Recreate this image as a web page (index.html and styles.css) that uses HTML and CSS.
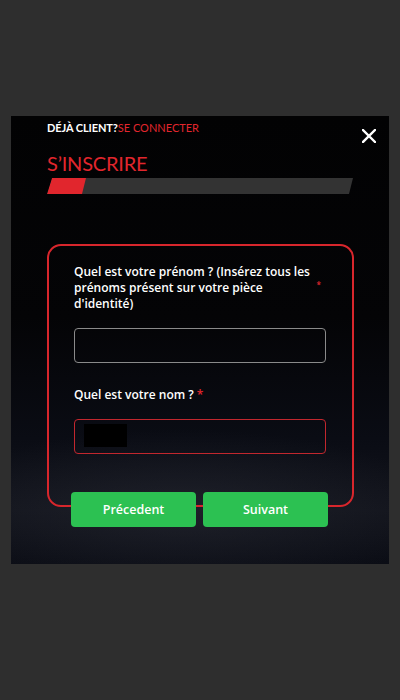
FILE: index.html
```html
<html>
<head>
    <meta charset="utf-8">
    <link rel="stylesheet" href="styles.css">
</head>
<body>
    <div class="modal">
        <span class="close">
            <svg width="14" height="14" viewBox="0 0 14 14"><path d="M1 1L13 13M13 1L1 13" stroke="#fff" stroke-width="2.4" stroke-linecap="square"/></svg>
        </span>
        <div class="login-line">
            <span class="already">DÉJÀ CLIENT?</span><span class="connect">SE CONNECTER</span>
        </div>
        <h1 class="title">S’INSCRIRE</h1>
        <div class="steps">
            <div class="steps-fill" style="width: 39px"></div>
        </div>

        <div class="form-card">
            <div class="field">
                <label class="field-label">
                    <span class="label-text">Quel est votre prénom ? (Insérez tous les prénoms présent sur votre pièce d'identité)</span>
                    <span class="req small">*</span>
                </label>
                <div class="input"></div>
            </div>
            <div class="field">
                <label class="field-label">
                    <span>Quel est votre nom ? <span class="req">*</span></span>
                </label>
                <div class="input error"><span class="autofill"></span></div>
            </div>
        </div>
        <div class="btn-row">
            <button class="btn">Précedent</button>
            <button class="btn">Suivant</button>
        </div>
    </div>
</body>
</html>
```

FILE: styles.css
```css
body {
    margin: 0;
    background-color: #2e2e2e;
    font-family: "Open Sans", Arial, sans-serif;
    color: #fff;
}

.modal {
    position: relative;
    width: 378px;
    height: 448px;
    margin: 116px 0 0 11px;
    padding: 5px 0 0 36px;
    box-sizing: border-box;
    background: radial-gradient(ellipse 70% 18% at 45% 88%, rgba(40, 42, 52, 0.55), rgba(40, 42, 52, 0) 100%),
        linear-gradient(180deg, #020203 0%, #040406 45%, #0a0c14 72%, #12141c 88%, #0b0d15 100%);
}

.close {
    position: absolute;
    top: 13px;
    right: 13px;
    display: flex;
}

.login-line {
    font-family: "Lato", Arial, sans-serif;
    font-size: 11px;
    line-height: 13px;
}

.already {
    font-weight: bold;
    letter-spacing: -0.1px;
}

.connect {
    color: #e1262d;
}

.title {
    margin: 17px 0 0 0;
    font-family: "Lato", Arial, sans-serif;
    font-weight: normal;
    font-size: 20px;
    line-height: 24px;
    color: #e1262d;
    letter-spacing: -0.2px;
}

.steps {
    margin-top: 3px;
    width: 306px;
    height: 16px;
    background-color: #333;
    clip-path: polygon(5px 0, 100% 0, calc(100% - 4px) 100%, 0 100%);
}

.steps-fill {
    height: 100%;
    background-color: #e1262d;
    clip-path: polygon(5px 0, 100% 0, calc(100% - 4px) 100%, 0 100%);
}

.form-card {
    margin-top: 50px;
    width: 307px;
    height: 263px;
    box-sizing: border-box;
    border: 2px solid #d8262c;
    border-radius: 14px;
    padding: 18px 26px 0 25px;
}

.field {
    margin-bottom: 24px;
}

.field-label {
    display: flex;
    align-items: center;
    justify-content: space-between;
    font-size: 12px;
    line-height: 16px;
    font-weight: 600;
    margin-bottom: 16px;
}

.label-text {
    width: 236px;
}

.req {
    color: #e1262d;
}

.req.small {
    font-size: 8px;
    margin-right: 5px;
    margin-top: -6px;
}

.input {
    height: 35px;
    box-sizing: border-box;
    border: 1px solid #8a8a8a;
    border-radius: 4px;
    padding: 4px 9px;
}

.input.error {
    border-color: #c2272e;
}

.autofill {
    display: block;
    width: 43px;
    height: 23px;
    background-color: #000;
}

.btn-row {
    display: flex;
    gap: 7px;
    margin: -15px 0 0 24px;
}

.btn {
    width: 125px;
    height: 35px;
    border: none;
    border-radius: 4px;
    background-color: #2cc152;
    color: #fff;
    font-family: "Open Sans", Arial, sans-serif;
    font-weight: 600;
    font-size: 12.5px;
}
```
